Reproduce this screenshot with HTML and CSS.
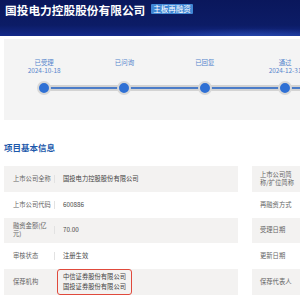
FILE: index.html
```html
<!DOCTYPE html>
<html lang="zh-CN">
<head>
    <meta charset="UTF-8">
    <meta name="viewport" content="width=device-width, initial-scale=1.0">
    <title>项目信息</title>
    <link rel="stylesheet" href="styles.css">
</head>
<body>
    <div class="banner">
        <h1 class="company">国投电力控股股份有限公司</h1>
        <span class="tag">主板再融资</span>
    </div>

    <div class="progress">
        <div class="steps">
            <div class="step">
                <div class="step-text"><div>已受理</div><div>2024-10-18</div></div>
                <span class="dot"></span>
            </div>
            <div class="step">
                <div class="step-text"><div>已问询</div></div>
                <span class="dot"></span>
            </div>
            <div class="step">
                <div class="step-text"><div>已回复</div></div>
                <span class="dot"></span>
            </div>
            <div class="step">
                <div class="step-text"><div>通过</div><div>2024-12-31</div></div>
                <span class="dot"></span>
            </div>
        </div>
    </div>

    <h2 class="section-title">项目基本信息</h2>

    <div class="info">
        <div class="cell alt"><span class="label">上市公司全称</span><span class="value">国投电力控股股份有限公司</span></div>
        <div class="side alt"><span class="side-label">上市公司简称/扩位简称</span></div>

        <div class="cell"><span class="label">上市公司代码</span><span class="value">600886</span></div>
        <div class="side"><span class="side-label">再融资方式</span></div>

        <div class="cell alt"><span class="label">融资金额(亿元)</span><span class="value">70.00</span></div>
        <div class="side alt"><span class="side-label">受理日期</span></div>

        <div class="cell"><span class="label">审核状态</span><span class="value">注册生效</span></div>
        <div class="side"><span class="side-label">更新日期</span></div>

        <div class="cell alt"><span class="label">保荐机构</span>
            <span class="value boxed"><span class="mark">中信证券股份有限公司<br>国投证券股份有限公司</span></span>
        </div>
        <div class="side alt"><span class="side-label">保荐代表人</span></div>
    </div>
</body>
</html>
```

FILE: styles.css
```css
body {
    margin: 0;
    width: 340px;
    overflow: hidden;
    font-family: "Noto Sans CJK SC", "Noto Sans", sans-serif;
    background: #fff;
}

/* 상단 배너 */
.banner {
    height: 36px;
    padding: 3px 5px 0;
    box-sizing: border-box;
    display: flex;
    align-items: flex-start;
    gap: 6px;
    background:
        radial-gradient(ellipse 170px 14px at 250px 38px, rgba(70, 120, 230, 0.45), transparent 70%),
        radial-gradient(ellipse 120px 8px at 90px 40px, rgba(60, 100, 210, 0.3), transparent 70%),
        linear-gradient(180deg, #0a175c 0%, #0c1c66 70%, #13298a 100%);
}
.company {
    margin: 0;
    font-size: 11.7px;
    line-height: 14px;
    font-weight: bold;
    color: #fff;
}
.tag {
    margin-top: 1px;
    height: 10px;
    padding: 0 2px;
    font-size: 7.5px;
    line-height: 10px;
    color: #fff;
    background-color: #3f86d4;
    border-radius: 1px;
}

/* 진행 단계 */
.progress {
    margin: 3px 0 0 4px;
    height: 81px;
    background-color: #f4f4f4;
    padding-top: 20px;
    box-sizing: border-box;
}
.steps {
    position: relative;
    display: flex;
}
.steps::before {
    content: "";
    position: absolute;
    left: 40px;
    right: 0;
    top: 25.5px;
    height: 6px;
    background: linear-gradient(180deg, #d3d3d3 0, #d3d3d3 2px, #4b7cc8 2px, #4b7cc8 4px, #d3d3d3 4px);
}
.step {
    flex: 0 0 80.3px;
    display: flex;
    flex-direction: column;
    align-items: center;
    position: relative;
}
.step-text {
    height: 16px;
    font-size: 6.4px;
    line-height: 8px;
    color: #5584cc;
    text-align: center;
    white-space: nowrap;
}
.dot {
    margin-top: 5.5px;
    width: 10px;
    height: 10px;
    border-radius: 50%;
    background-color: #2f70d4;
    border: 2px solid #d8d8d8;
}

.section-title {
    margin: 21px 0 0 4px;
    font-size: 8.5px;
    line-height: 12px;
    color: #1d59ab;
    font-weight: bold;
}

/* 기본 정보 표 */
.info {
    margin: 13px 0 0 4px;
    display: grid;
    grid-template-columns: 234px 100px;
    grid-auto-rows: 25.8px;
    column-gap: 14px;
    font-size: 6.3px;
    line-height: 8px;
}
.cell, .side {
    display: flex;
    align-items: center;
}
.alt { background-color: #f3f2f1; }
.label {
    flex: 0 0 38px;
    margin: 0 3px 0 9px;
    color: #666;
}
.value {
    padding-left: 8px;
    border-left: 1px solid #e2e2e2;
    color: #444;
}
.value.boxed { border-left: 0; padding-left: 3px; }
.mark {
    display: inline-block;
    padding: 2px 5px;
    line-height: 10px;
    border: 1px solid #e04a3c;
    border-radius: 3px;
}
.side-label {
    width: 36px;
    margin-left: 8px;
    color: #666;
}
```
